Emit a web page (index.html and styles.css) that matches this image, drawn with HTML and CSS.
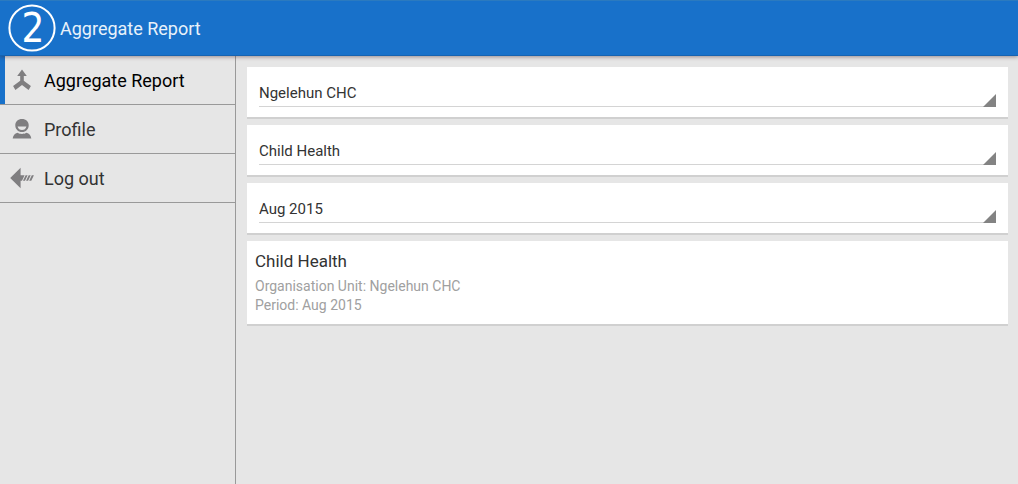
FILE: index.html
```html
<!DOCTYPE html>
<html lang="en">
<head>
<meta charset="utf-8">
<meta name="viewport" content="width=device-width, initial-scale=1">
<title>Aggregate Report</title>
<link rel="stylesheet" href="styles.css">
</head>
<body>
<header class="app-bar">
  <svg class="logo" viewBox="0 0 48 48" aria-hidden="true">
    <circle cx="24" cy="24" r="22.6" fill="none" stroke="#fff" stroke-width="2"/>
    <text class="logo-digit" x="25" y="38" text-anchor="middle">2</text>
  </svg>
  <h1 class="app-title">Aggregate Report</h1>
</header>
<div class="body">
  <nav class="drawer">
    <a class="drawer-item active" href="#report" aria-current="page">
      <svg class="icon" viewBox="0 0 24 24" aria-hidden="true">
        <path d="M12 1.500 16.800 8H13.800V12.800L20.900 18 18.600 21.900 12 16.900 5.400 21.900 3.100 18 10.200 12.800V8H7.200Z"/>
      </svg>
      <span>Aggregate Report</span>
    </a>
    <a class="drawer-item" href="#profile">
      <svg class="icon" viewBox="0 0 24 24" aria-hidden="true">
        <path fill-rule="evenodd" d="M12 2C16 2 18.700 4.600 18.700 8.200 18.700 12 16 15 12 15 8 15 5.300 12 5.300 8.200 5.300 4.600 8 2 12 2ZM7.600 9.400C8.200 11.800 9.800 12.900 12 12.900 14.200 12.900 15.800 11.800 16.400 9.400Z"/>
        <path d="M2.700 21.600C3 18.200 4.700 16.300 7.500 15.700 10 17.300 14 17.300 16.500 15.700 19.300 16.300 21 18.200 21.300 21.600Z"/>
      </svg>
      <span>Profile</span>
    </a>
    <a class="drawer-item" href="#logout">
      <svg class="icon" viewBox="0 0 24 24" aria-hidden="true">
        <path d="M0.200 12 10.600 1.800V9.200H14.600L12 14.800H10.600V22.200ZM15.600 9.200H17.600L15 14.800H13ZM18.700 9.200H20.700L18.100 14.800H16.100ZM21.800 9.200H23.900L21.300 14.800H19.200Z"/>
      </svg>
      <span>Log out</span>
    </a>
  </nav>
  <main class="content">
    <div class="card picker">
      <select class="spinner" aria-label="Organisation unit"><option>Ngelehun CHC</option></select>
    </div>
    <div class="card picker">
      <select class="spinner" aria-label="Data set"><option>Child Health</option></select>
    </div>
    <div class="card picker">
      <select class="spinner" aria-label="Period"><option>Aug 2015</option></select>
    </div>
    <section class="card summary">
      <h2 class="summary-title">Child Health</h2>
      <p class="summary-line">Organisation Unit: Ngelehun CHC</p>
      <p class="summary-line">Period: Aug 2015</p>
    </section>
  </main>
</div>
</body>
</html>
```
FILE: styles.css
```css
* {
  box-sizing: border-box;
}

body {
  margin: 0;
  min-height: 100vh;
  display: flex;
  flex-direction: column;
  background: #e6e6e6;
  color: #333;
  font-family: Roboto, sans-serif;
}

.app-bar {
  display: flex;
  align-items: center;
  gap: 4px;
  height: 56px;
  padding: 0 8px;
  background: #1871ca;
  border-top: 1px solid #2b7abf;
  border-bottom: 1px solid #1663b1;
  box-shadow: 0 1px 4px rgba(60, 30, 40, 0.45);
  z-index: 1;
}

.logo {
  width: 48px;
  height: 48px;
}

.logo-digit {
  fill: #fff;
  font: 40px "DejaVu Sans Condensed", "DejaVu Sans", sans-serif;
}

.app-title {
  margin: 0;
  color: #e8f1fa;
  font-size: 18px;
  font-weight: 400;
}

.body {
  flex: 1;
  display: flex;
}

.drawer {
  flex: none;
  width: 236px;
  border-right: 1px solid #999;
}

.drawer-item {
  display: flex;
  align-items: center;
  gap: 10px;
  height: 49px;
  padding-left: 10px;
  border-bottom: 1px solid #999;
  color: #333;
  font-size: 18px;
  text-decoration: none;
}

.drawer-item.active {
  background: linear-gradient(#1871ca, #1871ca) left / 5px 100% no-repeat;
  color: #000;
}

.icon {
  width: 24px;
  height: 24px;
  fill: #7f7e80;
}

.content {
  flex: 1;
  display: flex;
  flex-direction: column;
  gap: 6px;
  padding: 11px 10px 11px 11px;
}

.card {
  background: #fff;
  border-bottom: 2px solid #d0d0d0;
}

.picker {
  position: relative;
  padding: 12px 12px 10px;
}

.picker::after {
  content: "";
  position: absolute;
  right: 12px;
  bottom: 10px;
  width: 13px;
  height: 13px;
  background: #838383;
  clip-path: polygon(100% 0, 100% 100%, 0 100%);
  pointer-events: none;
}

.spinner {
  display: block;
  width: 100%;
  height: 28px;
  padding: 0;
  border: 0;
  border-bottom: 1px solid #d4d4d4;
  border-radius: 0;
  appearance: none;
  background: none;
  color: #333;
  font: 15px/28px Roboto, sans-serif;
}

.summary {
  padding: 8px 8px 9px;
}

.summary-title {
  margin: 0 0 3px;
  font-size: 17px;
  font-weight: 400;
  line-height: 25px;
}

.summary-line {
  margin: 0;
  color: #a0a0a0;
  font-size: 14px;
  line-height: 19px;
}
```
